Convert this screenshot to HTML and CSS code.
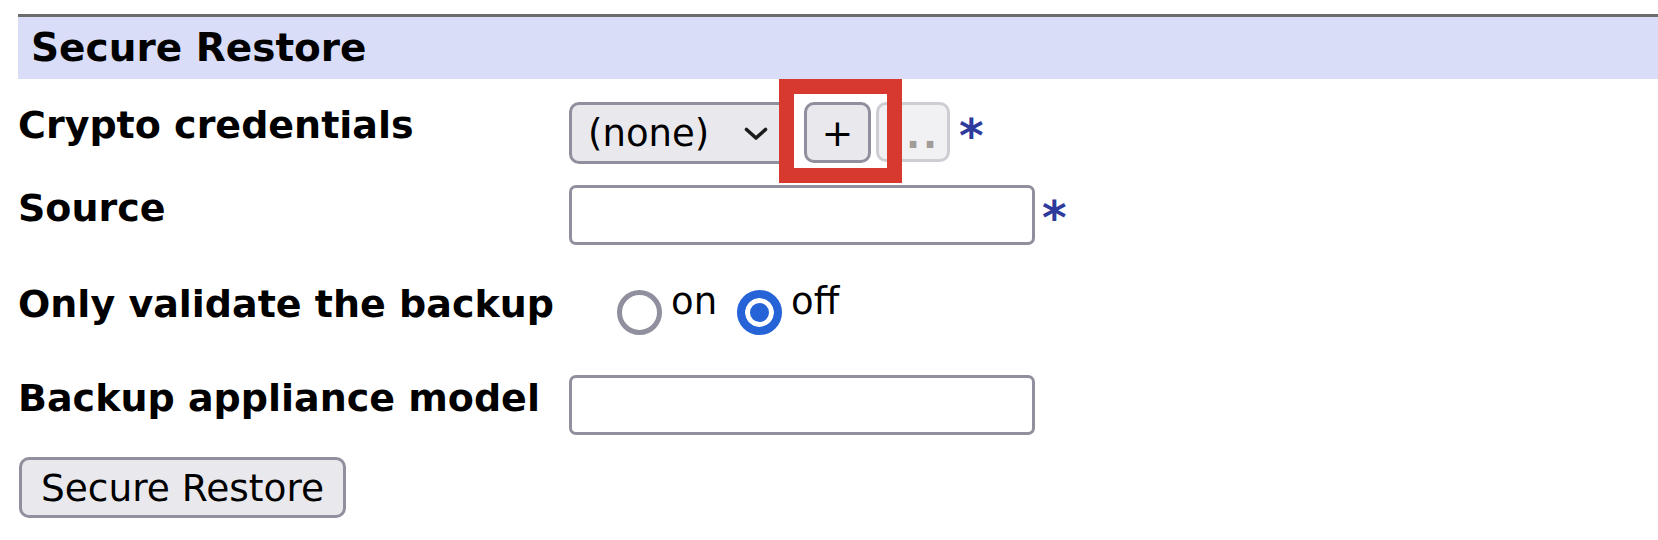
FILE: index.html
```html
<!DOCTYPE html>
<html>
<head>
<meta charset="utf-8">
<title>Secure Restore</title>
<link rel="stylesheet" href="styles.css">
</head>
<body>
<div class="page">
  <h2 class="section-title">Secure Restore</h2>
  <form class="form">
    <div class="row row-crypto">
      <label class="label">Crypto credentials</label>
      <div class="controls">
        <span class="select-wrap">
          <select class="select"><option>(none)</option></select>
          <svg class="chevron" width="24" height="14" viewBox="0 0 24 14"><polyline points="2.5,2.5 12,11 21.5,2.5" fill="none" stroke="#1b1b1b" stroke-width="3.6" stroke-linecap="round" stroke-linejoin="round"/></svg>
        </span>
        <span class="highlight-anchor">
          <button type="button" class="btn btn-add">+</button>
          <span class="highlight"></span>
        </span>
        <button type="button" class="btn btn-more" disabled>...</button>
        <span class="req">*</span>
      </div>
    </div>
    <div class="row row-source">
      <label class="label">Source</label>
      <div class="controls">
        <input type="text" class="text-input">
        <span class="req req-input">*</span>
      </div>
    </div>
    <div class="row row-validate">
      <label class="label">Only validate the backup</label>
      <div class="radio-group">
        <input type="radio" name="validate" class="radio" id="v-on">
        <label for="v-on" class="radio-text">on</label>
        <input type="radio" name="validate" class="radio radio-off" id="v-off" checked>
        <label for="v-off" class="radio-text">off</label>
      </div>
    </div>
    <div class="row row-model">
      <label class="label">Backup appliance model</label>
      <div class="controls">
        <input type="text" class="text-input">
      </div>
    </div>
    <button type="button" class="btn btn-submit">Secure Restore</button>
  </form>
</div>
</body>
</html>
```
FILE: styles.css
```css
* {
  box-sizing: border-box;
}

body {
  margin: 0;
  background: #ffffff;
  color: #000000;
  font-family: "DejaVu Sans", Verdana, sans-serif;
}

.page {
  padding: 14px 0 0 18px;
}

.section-title {
  margin: 0;
  height: 65px;
  border-top: 3px solid #6c6c6c;
  background: #d9ddf7;
  padding-left: 13px;
  font-size: 39px;
  line-height: 62px;
  font-weight: bold;
}

.form {
  display: flex;
  flex-direction: column;
  align-items: flex-start;
}

.row {
  display: flex;
  align-items: flex-start;
}

.row-crypto {
  margin-top: 23px;
}

.row-source {
  margin-top: 21px;
}

.row-validate {
  margin-top: 36px;
}

.row-model {
  margin-top: 40px;
}

.label {
  flex: none;
  width: 551px;
  font-size: 38px;
  line-height: 46px;
  font-weight: bold;
}

.controls {
  display: flex;
  align-items: flex-start;
}

.select-wrap {
  position: relative;
  display: block;
}

.select {
  -webkit-appearance: none;
  appearance: none;
  display: block;
  width: 222px;
  height: 62px;
  margin: 0;
  padding: 0 0 0 16px;
  border: 3px solid #8f8f9d;
  border-radius: 10px;
  background: #e9e9ed;
  color: #000;
  font-family: "DejaVu Sans", Verdana, sans-serif;
  font-size: 37px;
}

.chevron {
  position: absolute;
  left: 175px;
  top: 25px;
  pointer-events: none;
}

.btn {
  margin: 0;
  padding: 0;
  border: 3px solid #8f8f9d;
  border-radius: 10px;
  background: #e9e9ed;
  color: #000;
  font-family: "DejaVu Sans", Verdana, sans-serif;
  font-size: 37px;
}

.highlight-anchor {
  position: relative;
  display: block;
  margin-left: 13px;
}

.btn-add {
  display: block;
  width: 67px;
  height: 61px;
  font-size: 38px;
  line-height: 1;
}

.highlight {
  position: absolute;
  left: -25px;
  top: -23px;
  width: 123px;
  height: 104px;
  border: 15px solid #d8392f;
  z-index: 2;
}

.btn-more {
  width: 74px;
  height: 60px;
  margin-left: 5px;
  padding-top: 6px;
  border-color: #cdcdd4;
  background: #f1f1f4;
  color: #a09c98;
  font-weight: bold;
  letter-spacing: 3px;
  text-indent: 3px;
}

.req {
  margin-left: 9px;
  margin-top: 11px;
  color: #2e3a9c;
  font-weight: bold;
  font-size: 47px;
  line-height: 46px;
}

.req-input {
  margin-left: 7px;
  margin-top: 10px;
}

.text-input {
  display: block;
  width: 466px;
  height: 60px;
  margin: 0;
  border: 3px solid #8f8f9d;
  border-radius: 7px;
  background: #ffffff;
  font-family: "DejaVu Sans", Verdana, sans-serif;
  font-size: 37px;
}

.radio-group {
  display: flex;
  align-items: flex-start;
  padding-left: 48px;
}

.radio {
  -webkit-appearance: none;
  appearance: none;
  flex: none;
  width: 45px;
  height: 45px;
  margin: 9px 0 0 0;
  border: 5px solid #8f8f9d;
  border-radius: 50%;
  background: #ffffff;
}

.radio:checked {
  border: 8px solid #2563d6;
  background: #2563d6;
  box-shadow: inset 0 0 0 5px #ffffff;
}

.radio-off {
  margin-left: 20px;
}

.radio-text {
  margin-left: 9px;
  margin-top: -2px;
  font-size: 37px;
  line-height: 46px;
}

.btn-submit {
  width: 327px;
  height: 61px;
  margin-top: 22px;
  margin-left: 1px;
  font-size: 37.5px;
}
```
